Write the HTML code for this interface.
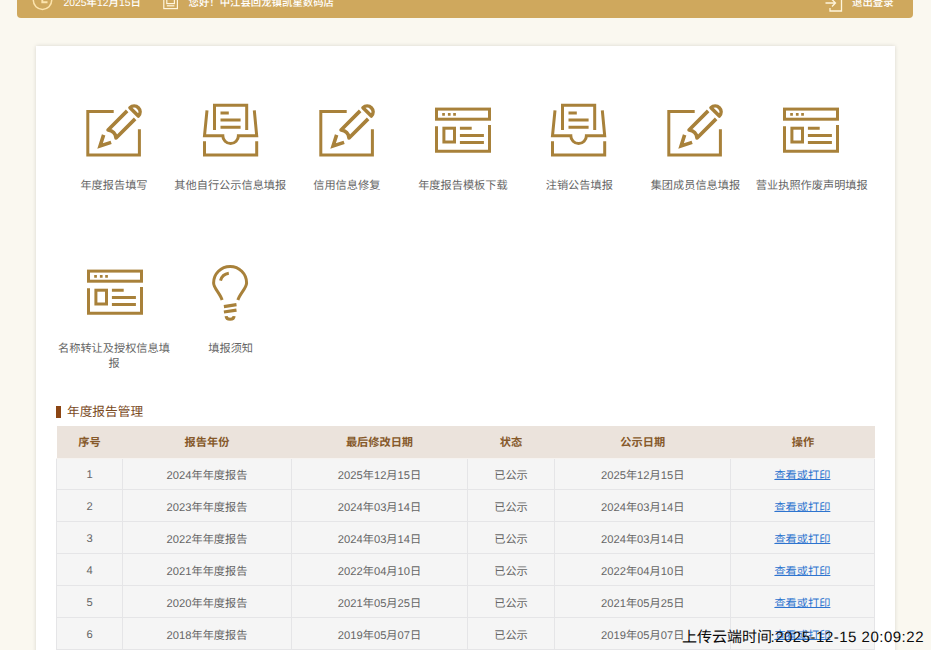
<!DOCTYPE html>
<html lang="zh-CN">
<head>
<meta charset="utf-8">
<title>年度报告管理</title>
<style>
*{box-sizing:border-box;}
html,body{margin:0;padding:0;}
body{width:931px;height:650px;overflow:hidden;position:relative;background:#faf8f0;font-family:"Liberation Sans","Noto Sans CJK SC",sans-serif;color:#666;text-rendering:geometricPrecision;}
.abs{position:absolute;}
.topbar{position:absolute;left:17px;top:-16px;width:896px;height:33.5px;background:#cfa85d;border-radius:0 0 4px 4px;color:#fff;font-size:10.4px;line-height:14px;}
.topbar span{position:absolute;top:13.2px;font-weight:500;white-space:nowrap;}
.topbar svg{position:absolute;overflow:visible;}
.card{position:absolute;left:36px;top:46px;width:859px;height:640px;background:#fff;box-shadow:0 0 4px rgba(0,0,0,0.14);}
.ico{position:absolute;width:80px;height:70px;overflow:visible;fill:none;stroke:#a8813a;stroke-width:3;}
.lbl{position:absolute;width:116px;text-align:center;font-size:11.2px;line-height:15px;color:#666;}
.sec{position:absolute;left:56px;top:406px;width:4.5px;height:12px;background:#8b4513;}
.sect{position:absolute;left:67px;top:403px;font-size:12.7px;line-height:18px;color:#7a4a1e;white-space:nowrap;}
table{position:absolute;left:56px;top:426px;width:818.4px;border-collapse:collapse;table-layout:fixed;font-size:11.2px;}
th{height:32.5px;background:#ebe3dc;color:#86592a;font-weight:bold;padding:0;text-align:center;border-bottom:1px solid #f6f3f0;}
td{height:32px;background:#f5f5f5;border:1px solid #e5e5e7;padding:2px 0 0;text-align:center;color:#666;}
tbody tr:first-child td{height:31px;padding-top:1px;}
td a{color:#2d74cf;text-decoration:underline;text-underline-offset:0px;text-decoration-thickness:1px;position:relative;left:-0.5px;}
.wm{position:absolute;left:682px;top:628px;font-size:15px;line-height:20px;color:#0a0a0a;white-space:nowrap;}
.wm span{letter-spacing:0.5px;margin-left:-1.5px;}
</style>
</head>
<body>
<div class="topbar">
  <svg style="left:15px;top:5.5px" width="22" height="22" viewBox="0 0 22 22" fill="none" stroke="#fce4ad" stroke-width="1.5"><circle cx="10.5" cy="10.3" r="9.2"/><path d="M10.3 4V12.3H15.5" stroke-width="1.9"/></svg>
  <span class="n" style="left:46.5px">2025年12月15日</span>
  <svg style="left:146px;top:7px" width="16" height="19" viewBox="0 0 16 19" fill="none" stroke="#fff5dc" stroke-width="1.2"><rect x="0.8" y="0.8" width="13.6" height="16.8"/><rect x="3.8" y="5" width="7.6" height="7.6"/><path d="M3.8 14.8H11.4"/></svg>
  <span style="left:171.5px">您好！中江县回龙镇凯星数码店</span>
  <svg style="left:808px;top:9.5px" width="18" height="18" viewBox="0 0 18 18" fill="none" stroke="#fff5dc" stroke-width="1.3"><path d="M5 4V1H16.5V17H5V14"/><path d="M0.5 9H10.5M7 5.5L10.5 9L7 12.5"/></svg>
  <span style="left:835px">退出登录</span>
</div>

<div class="card"></div>

<!-- row 1 icons -->
<svg class="ico" style="left:75px;top:95px" viewBox="0 0 80 70"><use href="#i-pen"/></svg>
<svg class="ico" style="left:190px;top:95px" viewBox="0 0 80 70"><use href="#i-tray"/></svg>
<svg class="ico" style="left:307.5px;top:95px" viewBox="0 0 80 70"><use href="#i-pen"/></svg>
<svg class="ico" style="left:422px;top:95px" viewBox="0 0 80 70"><use href="#i-win"/></svg>
<svg class="ico" style="left:538.4px;top:95px" viewBox="0 0 80 70"><use href="#i-tray"/></svg>
<svg class="ico" style="left:656px;top:95px" viewBox="0 0 80 70"><use href="#i-pen"/></svg>
<svg class="ico" style="left:770.4px;top:95px" viewBox="0 0 80 70"><use href="#i-win"/></svg>
<!-- row 2 icons -->
<svg class="ico" style="left:73.6px;top:257.3px" viewBox="0 0 80 70"><use href="#i-win"/></svg>
<svg class="ico" style="left:190px;top:255px" viewBox="0 0 80 70"><use href="#i-bulb"/></svg>

<svg width="0" height="0" style="position:absolute">
<defs>
  <g id="i-pen">
    <path d="M38.7 16.5H12.8V59.9H64.4V34.2"/>
    <g transform="translate(22.9 53.1) rotate(-45)" stroke-width="3.6">
      <path d="M13.4 -5.3L3.1 0L13.4 5.3" stroke-linejoin="miter" stroke-miterlimit="10"/>
      <path d="M47 -5.65H20Q24.5 0 20 5.65H47" stroke-linejoin="round"/>
      <path d="M51.3 5.9V-5.9A5.9 5.9 0 0 1 51.3 5.9Z" stroke-linejoin="round"/>
    </g>
  </g>
  <g id="i-tray">
    <path d="M24.5 35V10.2H56.7V35"/>
    <path d="M30.5 18.1H38.8M30.5 25.1H50.6M30.5 32.3H50.6"/>
    <path d="M17 15.3L14.5 40.7H32.8A7.8 7.8 0 0 0 48.4 40.7H66.7L64.3 15.3"/>
    <path d="M14.5 46.3V60H66.7V46.3"/>
  </g>
  <g id="i-win">
    <rect x="14.5" y="14.1" width="53" height="10.1"/>
    <path d="M20.2 19.4H22.9M25.9 19.4H28.6M31.2 19.4H33.9" stroke-width="2.7"/>
    <path d="M14.5 31.2V56.2H67.5V30.1"/>
    <rect x="21.9" y="33.2" width="10.6" height="13.8"/>
    <path d="M37.9 33.2H49.7M37.9 40.4H61.9M37.9 47.4H61.9"/>
  </g>
  <g id="i-bulb">
    <path d="M32.1 45C30.5 39 23.6 33 23.6 27.9A16.5 16.5 0 0 1 56.6 27.9C56.6 33 49.5 39 47.9 45"/>
    <path d="M30.5 25.6A10 10 0 0 1 38.8 18.3"/>
    <path d="M33.9 51.6L46.5 49.7M33.9 57L46.5 55.1" stroke-width="3.2"/>
    <path d="M36.1 61.1Q36.3 64.3 40.1 64.3Q43.9 64.3 44.1 61.1"/>
  </g>
</defs>
</svg>

<!-- labels -->
<div class="lbl" style="left:56px;top:179px">年度报告填写</div>
<div class="lbl" style="left:172.3px;top:179px">其他自行公示信息填报</div>
<div class="lbl" style="left:288.8px;top:179px">信用信息修复</div>
<div class="lbl" style="left:404.9px;top:179px">年度报告模板下载</div>
<div class="lbl" style="left:521.3px;top:179px">注销公告填报</div>
<div class="lbl" style="left:637.4px;top:179px">集团成员信息填报</div>
<div class="lbl" style="left:753.8px;top:179px">营业执照作废声明填报</div>
<div class="lbl" style="left:56px;top:341.9px">名称转让及授权信息填报</div>
<div class="lbl" style="left:172.7px;top:341.9px">填报须知</div>

<div class="sec"></div>
<div class="sect">年度报告管理</div>

<table>
<colgroup><col style="width:66px"><col style="width:169px"><col style="width:176px"><col style="width:87px"><col style="width:176.4px"><col style="width:144px"></colgroup>
<thead><tr><th>序号</th><th>报告年份</th><th>最后修改日期</th><th>状态</th><th>公示日期</th><th>操作</th></tr></thead>
<tbody>
<tr><td>1</td><td class="n">2024年年度报告</td><td class="n">2025年12月15日</td><td>已公示</td><td class="n">2025年12月15日</td><td><a>查看或打印</a></td></tr>
<tr><td>2</td><td class="n">2023年年度报告</td><td class="n">2024年03月14日</td><td>已公示</td><td class="n">2024年03月14日</td><td><a>查看或打印</a></td></tr>
<tr><td>3</td><td class="n">2022年年度报告</td><td class="n">2024年03月14日</td><td>已公示</td><td class="n">2024年03月14日</td><td><a>查看或打印</a></td></tr>
<tr><td>4</td><td class="n">2021年年度报告</td><td class="n">2022年04月10日</td><td>已公示</td><td class="n">2022年04月10日</td><td><a>查看或打印</a></td></tr>
<tr><td>5</td><td class="n">2020年年度报告</td><td class="n">2021年05月25日</td><td>已公示</td><td class="n">2021年05月25日</td><td><a>查看或打印</a></td></tr>
<tr><td>6</td><td class="n">2018年年度报告</td><td class="n">2019年05月07日</td><td>已公示</td><td class="n">2019年05月07日</td><td><a>查看或打印</a></td></tr>
</tbody>
</table>

<div class="wm">上传云端时间<span>:2025-12-15 20:09:22</span></div>
</body>
</html>
